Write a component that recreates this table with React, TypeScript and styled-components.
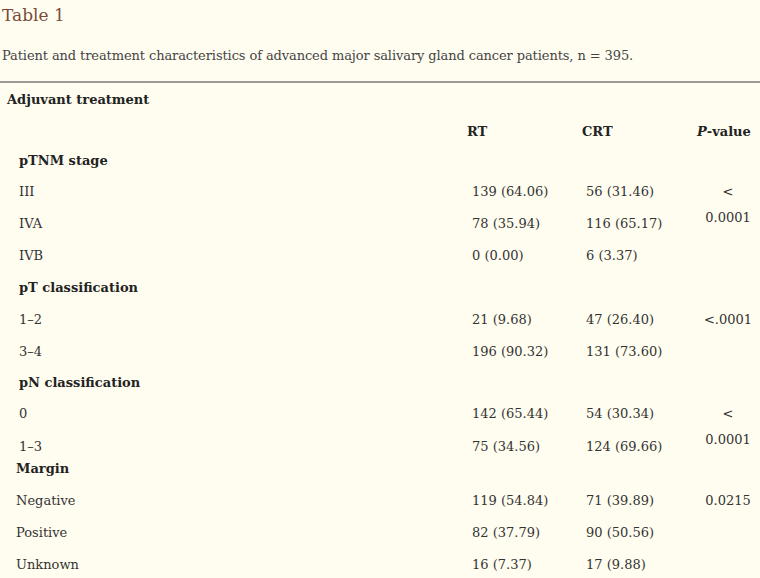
import React from 'react';
import styled, { createGlobalStyle } from 'styled-components';

type Row = {
  label: string;
  kind: 'group' | 'head' | 'section' | 'item';
  h: number;
  indent?: number;
  rt?: string;
  crt?: string;
  p?: string;
};

// row heights are the distances between text lines in the printed table
const rows: Row[] = [
  { label: 'Adjuvant treatment', kind: 'group', h: 32, indent: 7 },
  { label: '', kind: 'head', h: 29 },
  { label: 'pTNM stage', kind: 'section', h: 31, indent: 19 },
  { label: 'III', kind: 'item', h: 32, indent: 19, rt: '139 (64.06)', crt: '56 (31.46)', p: '< 0.0001' },
  { label: 'IVA', kind: 'item', h: 32, indent: 19, rt: '78 (35.94)', crt: '116 (65.17)' },
  { label: 'IVB', kind: 'item', h: 32, indent: 19, rt: '0 (0.00)', crt: '6 (3.37)' },
  { label: 'pT classification', kind: 'section', h: 32, indent: 19 },
  { label: '1–2', kind: 'item', h: 32, indent: 19, rt: '21 (9.68)', crt: '47 (26.40)', p: '<.0001' },
  { label: '3–4', kind: 'item', h: 31, indent: 19, rt: '196 (90.32)', crt: '131 (73.60)' },
  { label: 'pN classification', kind: 'section', h: 31, indent: 19 },
  { label: '0', kind: 'item', h: 33, indent: 19, rt: '142 (65.44)', crt: '54 (30.34)', p: '< 0.0001' },
  { label: '1–3', kind: 'item', h: 22, indent: 19, rt: '75 (34.56)', crt: '124 (69.66)' },
  { label: 'Margin', kind: 'section', h: 32, indent: 16 },
  { label: 'Negative', kind: 'item', h: 32, indent: 16, rt: '119 (54.84)', crt: '71 (39.89)', p: '0.0215' },
  { label: 'Positive', kind: 'item', h: 32, indent: 16, rt: '82 (37.79)', crt: '90 (50.56)' },
  { label: 'Unknown', kind: 'item', h: 32, indent: 16, rt: '16 (7.37)', crt: '17 (9.88)' },
];

const App = () => (
  <>
    <GlobalStyle />
    <Page>
      <Title>Table 1</Title>
      <Caption>
        Patient and treatment characteristics of advanced major salivary gland cancer patients, n = 395.
      </Caption>
      <Table>
        {rows.map((r, i) => (
          <TableRow key={i} $h={r.h}>
            {r.kind === 'head' ? (
              <>
                <span />
                <HeadCell $pad={3}>RT</HeadCell>
                <HeadCell $pad={4}>CRT</HeadCell>
                <HeadCell $pad={1}>
                  <i>P</i>-value
                </HeadCell>
              </>
            ) : (
              <>
                <Label $bold={r.kind !== 'item'} $indent={r.indent ?? 0}>
                  {r.label}
                </Label>
                {r.kind === 'item' && (
                  <>
                    <Value>{r.rt}</Value>
                    <Value>{r.crt}</Value>
                    {r.p && <PValue>{r.p}</PValue>}
                  </>
                )}
              </>
            )}
          </TableRow>
        ))}
      </Table>
    </Page>
  </>
);

export default App;

const GlobalStyle = createGlobalStyle`
  html, body {
    margin: 0;
    padding: 0;
    background: #fffdf0;
  }
  body {
    font-family: "DejaVu Serif", "Liberation Serif", serif;
    color: #333;
  }
`;

const Page = styled.div`
  width: 760px;
  height: 578px;
  overflow: hidden;
  background: #fffdf0;
`;

const Title = styled.h2`
  margin: 0;
  padding: 4px 0 0 2px;
  font-size: 17px;
  font-weight: normal;
  line-height: 22px;
  color: #7b4b3a;
`;

const Caption = styled.p`
  margin: 0;
  padding: 20px 0 0 2px;
  height: 57px;
  box-sizing: border-box;
  font-size: 13px;
  letter-spacing: -0.1px;
  line-height: 20px;
  color: #444;
  border-bottom: 2px solid #9c9a94;
`;

const Table = styled.div`
  display: flex;
  flex-direction: column;
  margin-top: 1px;
  font-size: 13px;
`;

const TableRow = styled.div<{ $h: number }>`
  display: grid;
  grid-template-columns: 464px 114px 118px 64px;
  height: ${({ $h }) => $h}px;
  align-items: start;
`;

const Cell = styled.div`
  padding-top: 7px;
  line-height: 18px;
  white-space: nowrap;
`;

const Label = styled(Cell)<{ $bold?: boolean; $indent: number }>`
  padding-left: ${({ $indent }) => $indent}px;
  font-weight: ${({ $bold }) => ($bold ? 700 : 400)};
  color: ${({ $bold }) => ($bold ? '#222' : '#333')};
`;

const HeadCell = styled(Cell)<{ $pad: number }>`
  padding-left: ${({ $pad }) => $pad}px;
  font-weight: 700;
  color: #222;
`;

const Value = styled(Cell)`
  padding-left: 8px;
`;

/* spans the rows below it: the text simply runs on past this row */
const PValue = styled.div`
  grid-column: 4;
  padding: 3px 4px 0;
  line-height: 26px;
  text-align: center;
`;
